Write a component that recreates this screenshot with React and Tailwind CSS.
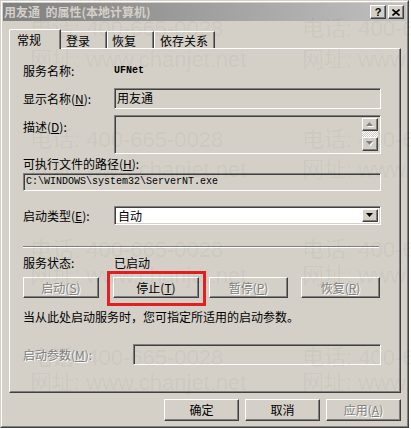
import React from "react";

const raised =
  "bg-[#d4d0c8] border border-t-white border-l-white border-r-[#404040] border-b-[#404040] shadow-[inset_-1px_-1px_#808080]";
const sunken =
  "border border-t-[#808080] border-l-[#808080] border-r-white border-b-white shadow-[inset_1px_1px_#404040,inset_-1px_-1px_#d4d0c8]";
const disabledText = "text-[#808080] [text-shadow:1px_1px_0_#fff]";

function Btn({ className = "", disabled, children }) {
  return (
    <div className={`flex items-center justify-center ${raised} ${className} ${disabled ? disabledText : "text-black"}`}>
      {children}
    </div>
  );
}

function Arrow({ dir = "down", color = "#000", shadow }) {
  const pts = dir === "down" ? "0,0 7,0 3.5,4" : "3.5,0 7,4 0,4";
  return (
    <svg width="8" height="5" viewBox="0 0 8 5" className="overflow-visible">
      {shadow && <polygon points={pts} fill="#fff" transform="translate(1,1)" />}
      <polygon points={pts} fill={color} />
    </svg>
  );
}

const marks = [
  { t: "top-[17px]", l: "left-[30px]", s: "电话: 400-665-0028" },
  { t: "top-[17px]", l: "left-[302px]", s: "电话: 400-665-0028" },
  { t: "top-[48px]", l: "left-[30px]", s: "网址: www.chanjet.net" },
  { t: "top-[48px]", l: "left-[302px]", s: "网址: www.chanjet.net" },
  { t: "top-[128px]", l: "left-[30px]", s: "电话: 400-665-0028" },
  { t: "top-[128px]", l: "left-[302px]", s: "电话: 400-665-0028" },
  { t: "top-[158px]", l: "left-[30px]", s: "网址: www.chanjet.net" },
  { t: "top-[158px]", l: "left-[302px]", s: "网址: www.chanjet.net" },
  { t: "top-[238px]", l: "left-[30px]", s: "电话: 400-665-0028" },
  { t: "top-[238px]", l: "left-[302px]", s: "电话: 400-665-0028" },
  { t: "top-[264px]", l: "left-[30px]", s: "网址: www.chanjet.net" },
  { t: "top-[264px]", l: "left-[302px]", s: "网址: www.chanjet.net" },
  { t: "top-[346px]", l: "left-[30px]", s: "电话: 400-665-0028" },
  { t: "top-[346px]", l: "left-[302px]", s: "电话: 400-665-0028" },
  { t: "top-[371px]", l: "left-[30px]", s: "网址: www.chanjet.net" },
  { t: "top-[371px]", l: "left-[302px]", s: "网址: www.chanjet.net" },
];

export default function App() {
  return (
    <div className="relative w-[411px] h-[429px] overflow-hidden bg-white font-['Noto_Sans_CJK_SC',sans-serif] text-[12px] leading-none text-black">
      <div className="w-[409px] h-[428px] border border-t-[#d4d0c8] border-l-[#d4d0c8] border-r-[#404040] border-b-[#404040]">
        <div className="h-full border border-t-white border-l-white border-r-[#808080] border-b-[#808080] bg-[#d4d0c8] p-px flex flex-col">
          {/* Title bar */}
          <div className="h-[18px] shrink-0 flex items-center bg-linear-to-r from-[#808080] to-[#c0c0c0] pl-[1px] pr-[2px]">
            <span className="font-bold text-[#d4d0c8] text-[12px] leading-none whitespace-pre">用友通  的属性(本地计算机)</span>
            <div className="ml-auto flex gap-[2px]">
              <div className={`w-[16px] h-[14px] flex items-center justify-center ${raised}`}>
                <span className="font-['Liberation_Sans',sans-serif] font-bold text-[11px] leading-none">?</span>
              </div>
              <div className={`w-[16px] h-[14px] flex items-center justify-center ${raised}`}>
                <svg width="8" height="7" viewBox="0 0 8 7">
                  <path d="M0.5 0.5 L7.5 6.5 M7.5 0.5 L0.5 6.5" stroke="#000" strokeWidth="1.6" fill="none" />
                </svg>
              </div>
            </div>
          </div>

          {/* Tabs */}
          <div className="mt-[8px] ml-[6px] h-[20px] flex items-end relative z-10">
            <div className="h-[20px] w-[52px] bg-[#d4d0c8] border-t border-l border-r border-t-white border-l-white border-r-[#404040] shadow-[inset_-1px_0_#808080] rounded-tl-[2px] pl-[7px] pt-[4px]">
              常规
            </div>
            <div className="h-[17px] mb-px w-[46px] border-t border-r border-t-white border-r-[#404040] shadow-[inset_-1px_0_#808080] pl-[5px] pt-[3px]">
              登录
            </div>
            <div className="h-[17px] mb-px w-[47px] border-t border-l border-r border-t-white border-l-white border-r-[#404040] shadow-[inset_-1px_0_#808080] pl-[4px] pt-[3px]">
              恢复
            </div>
            <div className="h-[17px] mb-px w-[61px] border-t border-l border-r border-t-white border-l-white border-r-[#404040] shadow-[inset_-1px_0_#808080] pl-[5px] pt-[3px]">
              依存关系
            </div>
          </div>

          {/* Panel */}
          <div className="-mt-px ml-[6px] w-[392px] h-[345px] shrink-0 border border-t-white border-l-white border-r-[#404040] border-b-[#404040] shadow-[inset_-1px_-1px_#808080] pl-[13px] flex flex-col">
            {/* service name */}
            <div className="mt-[13px] h-[18px] flex items-center">
              <div className="w-[91px]">服务名称:</div>
              <div className="font-['Liberation_Mono',monospace] text-[10px] font-bold">UFNet</div>
            </div>
            {/* display name */}
            <div className="mt-[8px] h-[21px] flex items-center">
              <div className="w-[91px]">显示名称(<u>N</u>):</div>
              <div className={`w-[267px] h-[21px] ${sunken} pl-[2px] pt-[3px]`}>用友通</div>
            </div>
            {/* description */}
            <div className="mt-[6px] flex items-start">
              <div className="w-[91px] pt-[6px]">描述(<u>D</u>):</div>
              <div className={`w-[267px] h-[39px] ${sunken} flex justify-end p-[2px]`}>
                <div className="w-[16px] flex flex-col">
                  <div className={`h-[14px] flex items-center justify-center ${raised}`}>
                    <Arrow dir="up" color="#808080" shadow />
                  </div>
                  <div className="h-[6px] bg-[repeating-conic-gradient(#ffffff_0_25%,#d4d0c8_0_50%)] bg-[length:2px_2px]" />
                  <div className={`h-[15px] flex items-center justify-center ${raised}`}>
                    <Arrow dir="down" color="#808080" shadow />
                  </div>
                </div>
              </div>
            </div>
            {/* path */}
            <div className="mt-[3px] h-[14px] flex items-center">可执行文件的路径(<u>H</u>):</div>
            <div className={`mt-[2px] w-[358px] h-[18px] ${sunken} flex items-center pl-[2px] font-['Liberation_Mono',monospace] text-[10px]`}>
              C:\WINDOWS\system32\ServerNT.exe
            </div>
            {/* startup type */}
            <div className="mt-[15px] h-[19px] flex items-center">
              <div className="w-[91px]">启动类型(<u>E</u>):</div>
              <div className={`w-[267px] h-[19px] bg-white ${sunken} flex items-center p-[2px]`}>
                <div className="flex-1 pl-[1px]">自动</div>
                <div className={`w-[16px] h-full flex items-center justify-center ${raised}`}>
                  <Arrow dir="down" />
                </div>
              </div>
            </div>
            {/* separator */}
            <div className="mt-[21px] w-[356px] h-[2px] border-t border-b border-t-[#808080] border-b-white" />
            {/* status */}
            <div className="mt-[8px] h-[14px] flex items-center">
              <div className="w-[91px]">服务状态:</div>
              <div>已启动</div>
            </div>
            {/* buttons */}
            <div className="mt-[7px] h-[21px] flex">
              <Btn className="w-[76px] h-[21px]" disabled>启动(<u>S</u>)</Btn>
              <Btn className="ml-[14px] w-[86px] h-[21px]">停止(<u>T</u>)</Btn>
              <Btn className="ml-[10px] w-[79px] h-[21px]" disabled>暂停(<u>P</u>)</Btn>
              <Btn className="ml-[13px] w-[79px] h-[21px]" disabled>恢复(<u>R</u>)</Btn>
            </div>
            <div className="mt-[12px] h-[14px] flex items-center">当从此处启动服务时，您可指定所适用的启动参数。</div>
            {/* params */}
            <div className="mt-[20px] h-[21px] flex items-center">
              <div className={`w-[110px] ${disabledText}`}>启动参数(<u>M</u>):</div>
              <div className={`w-[248px] h-[21px] ${sunken}`} />
            </div>
          </div>

          {/* bottom buttons */}
          <div className="mt-[6px] flex justify-end gap-[6px] pr-[5px]">
            <Btn className="w-[75px] h-[22px]">确定</Btn>
            <Btn className="w-[75px] h-[22px]">取消</Btn>
            <Btn className="w-[75px] h-[22px]" disabled>应用(<u>A</u>)</Btn>
          </div>
        </div>
      </div>

      {/* red annotation box */}
      <div className="absolute left-[107px] top-[271px] w-[99px] h-[35px] border-[3px] border-[#e3201f] pointer-events-none" />

      {/* watermark */}
      {marks.map((m, i) => (
        <div
          key={i}
          className={`absolute ${m.t} ${m.l} pointer-events-none whitespace-nowrap text-[22px] leading-[24px] font-['Liberation_Sans','Noto_Sans_CJK_SC',sans-serif] text-black/[0.05]`}
        >
          {m.s}
        </div>
      ))}
    </div>
  );
}
